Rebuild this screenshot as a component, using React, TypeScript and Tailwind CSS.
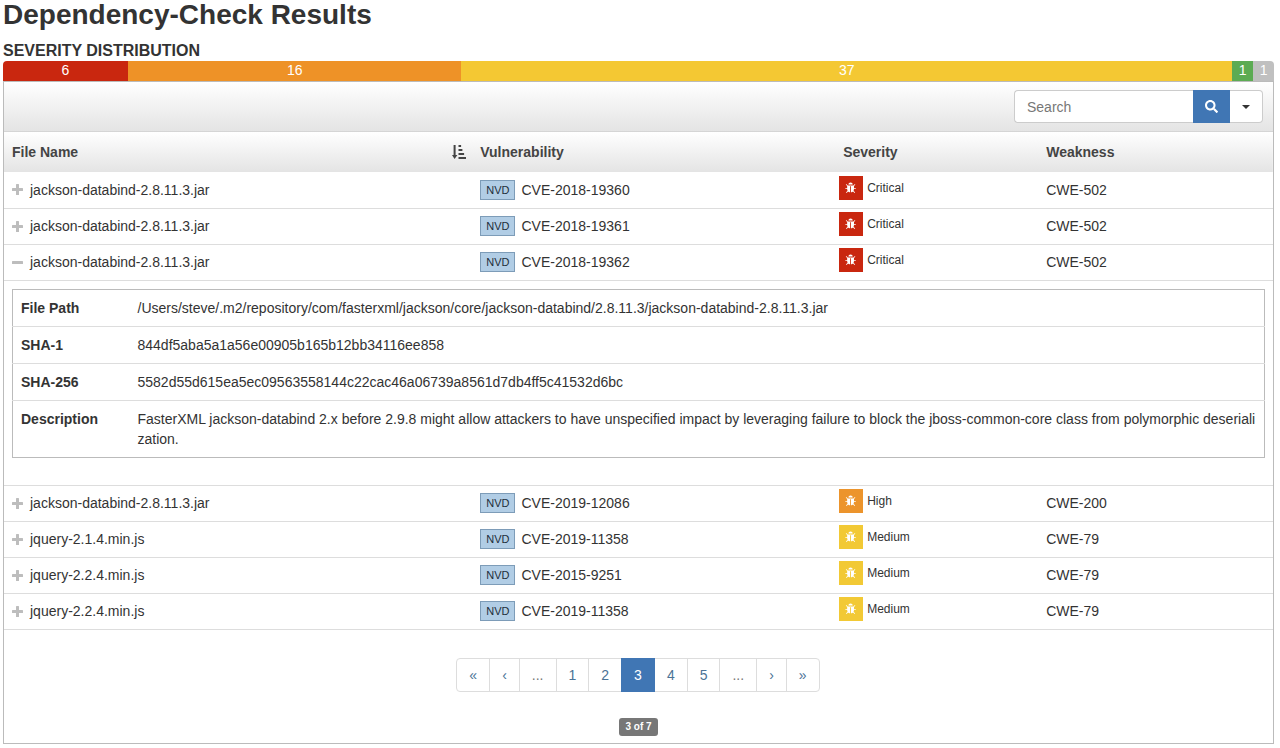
import React, { useState } from 'react';
import { FaSearch } from 'react-icons/fa';
import clsx from 'clsx';

type Severity = 'Critical' | 'High' | 'Medium';

interface Finding {
    id: number;
    file: string;
    cve: string;
    severity: Severity;
    cwe: string;
    details?: [string, string][];
}

const DISTRIBUTION = [
    { label: 'Critical', count: 6, color: 'bg-[#c9270f]' },
    { label: 'High', count: 16, color: 'bg-[#ee9227]' },
    { label: 'Medium', count: 37, color: 'bg-[#f4c833]' },
    { label: 'Low', count: 1, color: 'bg-[#5cab53]' },
    { label: 'Unassigned', count: 1, color: 'bg-[#c0c0c0]' },
];

const SEVERITY_COLORS: Record<Severity, string> = {
    Critical: 'bg-[#c9270f]',
    High: 'bg-[#ec942c]',
    Medium: 'bg-[#f2c935]',
};

const FINDINGS: Finding[] = [
    { id: 1, file: 'jackson-databind-2.8.11.3.jar', cve: 'CVE-2018-19360', severity: 'Critical', cwe: 'CWE-502' },
    { id: 2, file: 'jackson-databind-2.8.11.3.jar', cve: 'CVE-2018-19361', severity: 'Critical', cwe: 'CWE-502' },
    {
        id: 3,
        file: 'jackson-databind-2.8.11.3.jar',
        cve: 'CVE-2018-19362',
        severity: 'Critical',
        cwe: 'CWE-502',
        details: [
            ['File Path', '/Users/steve/.m2/repository/com/fasterxml/jackson/core/jackson-databind/2.8.11.3/jackson-databind-2.8.11.3.jar'],
            ['SHA-1', '844df5aba5a1a56e00905b165b12bb34116ee858'],
            ['SHA-256', '5582d55d615ea5ec09563558144c22cac46a06739a8561d7db4ff5c41532d6bc'],
            ['Description', 'FasterXML jackson-databind 2.x before 2.9.8 might allow attackers to have unspecified impact by leveraging failure to block the jboss-common-core class from polymorphic deserialization.'],
        ],
    },
    { id: 4, file: 'jackson-databind-2.8.11.3.jar', cve: 'CVE-2019-12086', severity: 'High', cwe: 'CWE-200' },
    { id: 5, file: 'jquery-2.1.4.min.js', cve: 'CVE-2019-11358', severity: 'Medium', cwe: 'CWE-79' },
    { id: 6, file: 'jquery-2.2.4.min.js', cve: 'CVE-2015-9251', severity: 'Medium', cwe: 'CWE-79' },
    { id: 7, file: 'jquery-2.2.4.min.js', cve: 'CVE-2019-11358', severity: 'Medium', cwe: 'CWE-79' },
];

const PAGES = ['«', '‹', '...', '1', '2', '3', '4', '5', '...', '›', '»'];

const BugIcon = () => (
    <svg viewBox="0 0 1792 1792" className="size-3 fill-white" aria-hidden="true">
        <path d="M1632 960q0 26-19 45t-45 19h-224q0 171-67 290l208 209q19 19 19 45t-19 45q-18 19-45 19t-45-19l-198-197q-5 5-15 13t-42 28.5-65 36.5-82 29-97 13v-896h-128v896q-51 0-101.5-13.5t-87-33-66-39-43.5-32.5l-15-14-183 207q-20 21-48 21-24 0-43-16-19-18-20.5-44.5t15.5-46.5l202-227q-58-114-58-274h-224q-26 0-45-19t-19-45 19-45 45-19h224v-294l-173-173q-19-19-19-45t19-45 45-19 45 19l173 173h844l173-173q19-19 45-19t45 19 19 45-19 45l-173 173v294h224q26 0 45 19t19 45zm-480-576h-640q0-133 93.5-226.5t226.5-93.5 226.5 93.5 93.5 226.5z" />
    </svg>
);

const ToggleIcon = ({ open }: { open: boolean }) => (
    <svg viewBox="0 0 11 11" className="size-[11px] fill-[#bdbdbd]" aria-hidden="true">
        <rect x="0" y="4" width="11" height="3" rx="0.5" />
        {!open && <rect x="4" y="0" width="3" height="11" rx="0.5" />}
    </svg>
);

const SortIcon = () => (
    <svg viewBox="0 0 14 14" className="size-[14px] fill-[#444]" aria-hidden="true">
        <path d="M1.6 0h2v10h1.8L2.6 14 0 10h1.6z" />
        <path d="M6.5 0h2.6v2H6.5zM6.5 4h3.9v2H6.5zM6.5 8h5.6v2H6.5zM6.5 12H14v2H6.5z" />
    </svg>
);

const DetailsTable = ({ details }: { details: [string, string][] }) => (
    <table className="w-full table-fixed border border-[#bbb]">
        <tbody>
            {details.map(([name, value]) => (
                <tr key={name} className="border-t border-[#ddd] first:border-t-0">
                    <th scope="row" className="w-[117px] px-2 py-2 text-left align-top font-bold">{name}</th>
                    <td className="px-2 py-2 align-top break-all">{value}</td>
                </tr>
            ))}
        </tbody>
    </table>
);

const FindingRow = ({ finding, open, onToggle }: { finding: Finding, open: boolean, onToggle: () => void }) => (
    <>
        <tr className="h-9 border-b border-[#ddd]">
            <td className="px-2">
                <div className="flex items-center gap-[7px]">
                    <button type="button" onClick={onToggle} aria-expanded={open} aria-label={`Details of ${finding.cve}`}>
                        <ToggleIcon open={open} />
                    </button>
                    {finding.file}
                </div>
            </td>
            <td className="px-2">
                <div className="flex items-center gap-[6px]">
                    <span className="border border-[#7d9cb8] bg-[#b1cde5] px-[5px] text-[11px] leading-[18px] text-[#222e3a]">NVD</span>
                    {finding.cve}
                </div>
            </td>
            <td className="px-1">
                <div className="flex items-center gap-1 pb-1 text-xs">
                    <span className={clsx('flex size-6 items-center justify-center', SEVERITY_COLORS[finding.severity])}>
                        <BugIcon />
                    </span>
                    {finding.severity}
                </div>
            </td>
            <td className="px-2">{finding.cwe}</td>
        </tr>
        {open && finding.details && (
            <tr className="border-b border-[#ddd]">
                <td colSpan={4} className="px-2 pt-2 pb-[27px]">
                    <DetailsTable details={finding.details} />
                </td>
            </tr>
        )}
    </>
);

export default function App() {
    const [openRows, setOpenRows] = useState<number[]>([3]);
    const [page, setPage] = useState('3');
    const [query, setQuery] = useState('');

    const toggleRow = (id: number) => {
        setOpenRows(openRows.includes(id) ? openRows.filter((r) => r !== id) : [...openRows, id]);
    };

    return (
        <main className="bg-white pr-[6px] pb-1 pl-[3px] font-['Liberation_Sans',Arial,sans-serif] text-sm leading-5 text-[#333]">
            <h1 className="pb-3 text-[28px] leading-[29px] font-bold">Dependency-Check Results</h1>
            <h2 className="text-base leading-5 font-bold">SEVERITY DISTRIBUTION</h2>

            <div className="flex h-5 overflow-hidden rounded-t text-center leading-[19px] text-white">
                {DISTRIBUTION.map((d) => (
                    <div key={d.label} title={d.label} className={clsx('basis-0', d.color)} style={{ flexGrow: d.count }}>
                        {d.count}
                    </div>
                ))}
            </div>

            <section className="border border-[#bbb]">
                <form
                    onSubmit={(e) => e.preventDefault()}
                    className="flex justify-end border-b border-[#d5d5d5] bg-linear-to-b from-white to-[#e4e4e4] px-[10px] py-2"
                >
                    <input
                        type="text"
                        aria-label="Search"
                        placeholder="Search"
                        value={query}
                        onChange={(e) => setQuery(e.target.value)}
                        className="h-[33px] w-[179px] rounded-l border border-r-0 border-[#ccc] bg-white px-3 outline-none placeholder:text-[#777]"
                    />
                    <button type="submit" aria-label="Run search" className="flex w-[37px] items-center justify-center bg-[#4076b4] text-white">
                        <FaSearch size={13} />
                    </button>
                    <button type="button" aria-label="Search options" className="flex w-[33px] items-center justify-center rounded-r border border-l-0 border-[#ccc] bg-white">
                        <svg viewBox="0 0 8 4" className="h-1 w-2 fill-[#333]" aria-hidden="true">
                            <path d="M0 0h8L4 4z" />
                        </svg>
                    </button>
                </form>

                <table className="w-full table-fixed">
                    <thead>
                        <tr className="h-10 bg-linear-to-b from-white to-[#e4e4e4] text-left text-[#444]">
                            <th className="w-[36.9%] pr-1 pl-2 font-bold">
                                <div className="flex items-center justify-between">
                                    File Name
                                    <button type="button" aria-label="Sort by file name" className="pr-[2px]">
                                        <SortIcon />
                                    </button>
                                </div>
                            </th>
                            <th className="w-[28.6%] px-2 font-bold">Vulnerability</th>
                            <th className="w-[16%] px-2 font-bold">Severity</th>
                            <th className="px-2 font-bold">Weakness</th>
                        </tr>
                    </thead>
                    <tbody>
                        {FINDINGS.map((f) => (
                            <FindingRow key={f.id} finding={f} open={openRows.includes(f.id)} onToggle={() => toggleRow(f.id)} />
                        ))}
                    </tbody>
                </table>

                <nav aria-label="Pages" className="mt-7 flex justify-center">
                    {PAGES.map((p, i) => (
                        <button
                            key={i}
                            type="button"
                            onClick={() => /\d/.test(p) && setPage(p)}
                            className={clsx(
                                '-ml-px border px-3 py-[6px] first:rounded-l last:rounded-r',
                                p === page && 'z-10 border-[#4076b4] bg-[#4076b4] text-white',
                                p !== page && 'border-[#ddd]',
                                p !== page && (p === '...' ? 'text-[#777]' : 'text-[#4b7396]')
                            )}
                        >
                            {p}
                        </button>
                    ))}
                </nav>
                <div className="mt-[26px] mb-[7px] flex justify-center">
                    <span className="rounded-[3px] bg-[#777] px-[6px] text-[10px] leading-[18px] font-bold text-white">{page} of 7</span>
                </div>
            </section>
        </main>
    );
}
